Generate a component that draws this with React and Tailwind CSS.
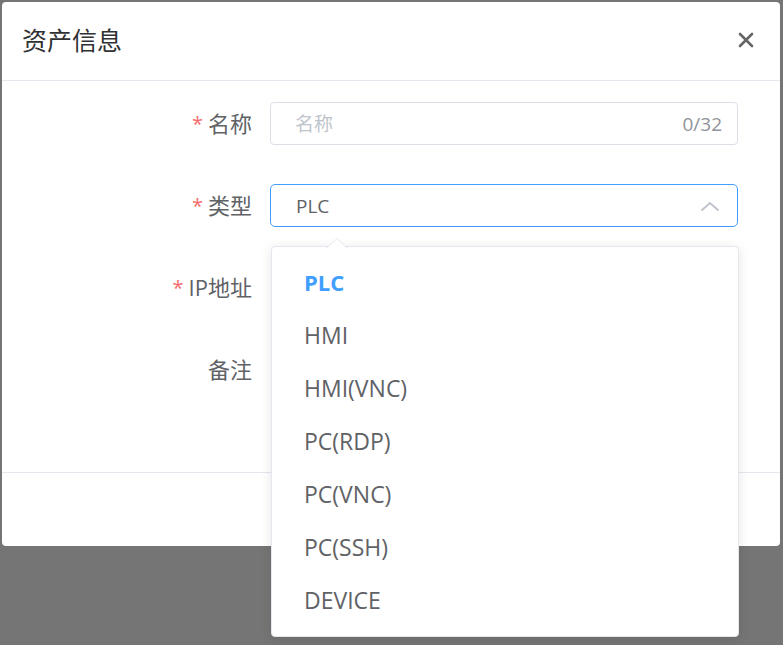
import React from "react";

const items = ["PLC", "HMI", "HMI(VNC)", "PC(RDP)", "PC(VNC)", "PC(SSH)", "DEVICE"];

function Label({ text, required }) {
  return (
    <div className="w-[268px] shrink-0 pr-[18px] flex justify-end items-center text-[22px] text-[#606266]">
      {required && <span className="text-[#f56c6c] mr-[5px] text-[20px] leading-none">*</span>}
      <span>{text}</span>
    </div>
  );
}

export default function App() {
  return (
    <div
      className="relative w-[783px] h-[645px] overflow-hidden bg-[#757575] pt-[2px] pl-[2px]"
      style={{ fontFamily: '"Open Sans", "Noto Sans CJK SC", sans-serif' }}
    >
      <div className="w-[778px] h-[544px] bg-white rounded-[4px] flex flex-col">
        <div className="h-[79px] shrink-0 border-b border-[#e4e7ed] flex items-center justify-between pl-[20px] pr-[26px]">
          <span className="text-[25px] text-[#303133]">资产信息</span>
          <svg width="16" height="16" viewBox="0 0 16 16" className="mt-[-2px]">
            <path d="M2 2 L14 14 M14 2 L2 14" stroke="#666" strokeWidth="2.6" strokeLinecap="round" />
          </svg>
        </div>
        <div className="h-[392px] shrink-0 border-b border-[#e4e7ed] pt-[21px] flex flex-col gap-[39px]">
          <div className="flex h-[43px]">
            <Label text="名称" required />
            <div className="w-[468px] h-[43px] border border-[#dcdfe6] rounded-[4px] flex items-center justify-between pl-[24px] pr-[15px] pt-[2px] text-[19px]">
              <span className="text-[#c0c4cc]">名称</span>
              <span className="text-[#909399]">0/32</span>
            </div>
          </div>
          <div className="flex h-[43px]">
            <Label text="类型" required />
            <div className="w-[468px] h-[43px] border-[1.5px] border-[#409eff] rounded-[5px] flex items-center justify-between pl-[25px] pr-[17px] pt-[1px] text-[19px]">
              <span className="text-[#606266]">PLC</span>
              <svg width="20" height="11" viewBox="0 0 20 11">
                <path d="M1.5 9.5 L10 2 L18.5 9.5" fill="none" stroke="#c0c4cc" strokeWidth="2" />
              </svg>
            </div>
          </div>
          <div className="flex h-[43px]">
            <Label text="IP地址" required />
            <div className="w-[468px] h-[43px]" />
          </div>
          <div className="flex h-[43px]">
            <Label text="备注" />
            <div className="w-[468px] h-[43px]" />
          </div>
        </div>
        <div className="flex-1" />
      </div>

      <div className="absolute left-[271px] top-[246px] w-[468px] h-[391px] bg-white border border-[#e4e7ed] rounded-[4px] shadow-[0_2px_12px_rgba(0,0,0,0.1)] pt-[9px]">
        <svg width="20" height="10" viewBox="0 0 20 10" className="absolute left-[55px] top-[-9px]">
          <path d="M0 10 L10 0.5 L20 10" fill="white" stroke="#e4e7ed" strokeWidth="1" />
        </svg>
        {items.map((it, i) => (
          <div
            key={it}
            className={
              i === 0
                ? "h-[53px] flex items-center pl-[32px] text-[22px] font-bold text-[#409eff]"
                : "h-[53px] flex items-center pl-[32px] text-[23px] text-[#606266]"
            }
          >
            {it}
          </div>
        ))}
      </div>
    </div>
  );
}
